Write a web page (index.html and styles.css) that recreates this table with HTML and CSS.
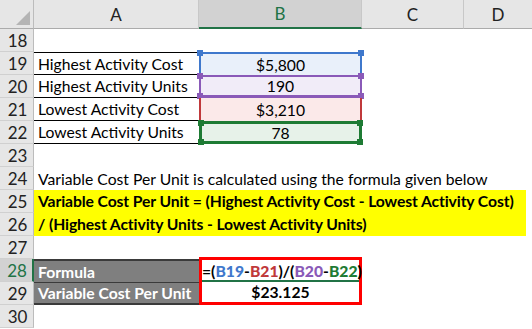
FILE: index.html
```html
<!DOCTYPE html>
<html lang="en">
<head>
    <meta charset="UTF-8">
    <title>Variable Cost Per Unit</title>
    <link rel="stylesheet" href="styles.css">
</head>
<body>
    <div class="sheet">
        <!-- column headers -->
        <div class="corner"><span class="tri"></span></div>
        <div class="col-head">A</div>
        <div class="col-head active">B</div>
        <div class="col-head">C</div>
        <div class="col-head last">D</div>

        <div class="row-head">18</div>
        <div class="cell span"></div>

        <div class="row-head">19</div>
        <div class="cell label top">Highest Activity Cost</div>
        <div class="cell val ref-blue">$5,800<i class="dot tl"></i><i class="dot tr"></i></div>
        <div class="cell"></div><div class="cell"></div>

        <div class="row-head">20</div>
        <div class="cell label">Highest Activity Units</div>
        <div class="cell val ref-purple">190<i class="dot tl"></i><i class="dot tr"></i><i class="dot bl"></i><i class="dot br"></i></div>
        <div class="cell"></div><div class="cell"></div>

        <div class="row-head">21</div>
        <div class="cell label">Lowest Activity Cost</div>
        <div class="cell val ref-red">$3,210</div>
        <div class="cell"></div><div class="cell"></div>

        <div class="row-head">22</div>
        <div class="cell label">Lowest Activity Units</div>
        <div class="cell val ref-green">78<i class="dot tl"></i><i class="dot tr"></i><i class="dot bl"></i><i class="dot br"></i></div>
        <div class="cell"></div><div class="cell"></div>

        <div class="row-head">23</div>
        <div class="cell span"></div>

        <div class="row-head">24</div>
        <div class="cell span text">Variable Cost Per Unit is calculated using the formula given below</div>

        <div class="row-head">25</div>
        <div class="cell span"><span class="yellow">Variable Cost Per Unit = (Highest Activity Cost - Lowest Activity Cost)</span></div>

        <div class="row-head">26</div>
        <div class="cell span"><span class="yellow">/ (Highest Activity Units - Lowest Activity Units)</span></div>

        <div class="row-head">27</div>
        <div class="cell span"></div>

        <div class="row-head sel">28</div>
        <div class="cell dark">Formula</div>
        <div class="cell formula">=(<b class="c-blue">B19</b>-<b class="c-red">B21</b>)/(<b class="c-purple">B20</b>-<b class="c-green">B22</b>)<span class="caret"></span><i class="active-line"></i></div>
        <div class="cell"></div><div class="cell"></div>

        <div class="row-head">29</div>
        <div class="cell dark bottom">Variable Cost Per Unit</div>
        <div class="cell result">$23.125</div>
        <div class="cell"></div><div class="cell"></div>

        <div class="row-head">30</div>
        <div class="cell span"></div>
    </div>
</body>
</html>
```
FILE: styles.css
```css
body {
    margin: 0;
    background: #fff;
    font-family: Lato, "Liberation Sans", sans-serif;
    font-size: 15.7px;
    color: #000;
}
.sheet {
    display: grid;
    grid-template-columns: 34px 165px 163px 102px 68px;
    grid-template-rows: 29px repeat(13, 23px);
    width: 532px;
    height: 329px;
    overflow: hidden;
}
.corner {
    background: #e6e6e6;
    border-right: 1px solid #bcbcbc;
    border-bottom: 1px solid #ababab;
    position: relative;
}
.tri {
    position: absolute;
    right: 3px;
    bottom: 3px;
    width: 0;
    height: 0;
    border-left: 14px solid transparent;
    border-bottom: 14px solid #b4b4b4;
}
.col-head {
    background: #e6e6e6;
    border-right: 1px solid #c8c8c8;
    border-bottom: 1px solid #ababab;
    display: flex;
    align-items: center;
    justify-content: center;
    color: #222;
    font-size: 17px;
}
.col-head.active {
    background: #d2d2d2;
    color: #217346;
    border-bottom: 2px solid #217346;
}
.col-head.last {
    border-right: none;
}
.row-head {
    background: #e6e6e6;
    border-right: 1px solid #bcbcbc;
    border-bottom: 1px solid #d0d0d0;
    display: flex;
    align-items: center;
    justify-content: center;
    color: #222;
    padding-left: 2px;
    font-size: 17px;
}
.row-head.sel {
    background: #d2d2d2;
    color: #217346;
    border-right: 2px solid #217346;
}
.cell {
    display: flex;
    align-items: center;
    white-space: nowrap;
    position: relative;
}
.span {
    grid-column: 2 / -1;
}
.text {
    padding-left: 4px;
}
.label {
    padding-left: 4px;
    border-bottom: 1px solid #000;
}
.label.top {
    border-top: 1px solid #000;
}
.val {
    justify-content: center;
}
.ref-blue {
    background: #e9f0fa;
    border: 2px solid #3f78cc;
    border-bottom: none;
}
.ref-purple {
    background: #f1ecf8;
    border: 2px solid #8a5ab8;
    border-bottom: 3px solid #8a5ab8;
}
.ref-red {
    background: #fbe9e9;
    border-left: 2px solid #c0393b;
    border-right: 2px solid #c0393b;
}
.ref-green {
    background: #e7f2e9;
    border: 3px solid #1e7b34;
}
.dot {
    position: absolute;
    width: 6px;
    height: 6px;
}
.ref-blue .dot { background: #3f78cc; }
.ref-purple .dot { background: #8a5ab8; }
.ref-green .dot { background: #1e7b34; }
.dot.tl { left: -4px; top: -4px; }
.dot.tr { right: -4px; top: -4px; }
.dot.bl { left: -4px; bottom: -4px; }
.dot.br { right: -4px; bottom: -4px; }
.yellow {
    background: #ffff00;
    font-weight: bold;
    width: 492px;
    height: 23px;
    line-height: 23px;
    padding-left: 4px;
    box-sizing: border-box;
    letter-spacing: -0.1px;
}
.dark {
    background: #7f7f7f;
    color: #fff;
    font-weight: bold;
    padding-left: 4px;
    border-top: 2px solid #3a3a3a;
}
.dark.bottom {
    border-top: 1px solid #3a3a3a;
    border-bottom: 2px solid #3a3a3a;
}
.formula {
    font-weight: bold;
    border: 3px solid #ff0000;
    border-bottom: none;
    margin-top: -2px;
}
.c-blue { color: #3f78cc; }
.c-red { color: #c0393b; }
.c-purple { color: #8a5ab8; }
.c-green { color: #1e7b34; }
.caret {
    display: inline-block;
    width: 1px;
    height: 18px;
    background: #000;
    margin-left: 1px;
}
.active-line {
    position: absolute;
    left: 0;
    right: 0;
    bottom: 0;
    height: 2px;
    background: #217346;
}
.result {
    justify-content: center;
    font-weight: bold;
    border: 3px solid #ff0000;
    border-top: none;
}
```
